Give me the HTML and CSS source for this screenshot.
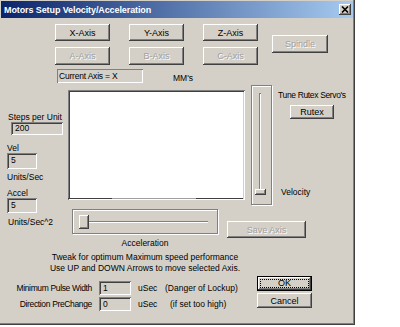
FILE: index.html
```html
<!DOCTYPE html>
<html lang="en">
  <head>
    <meta charset="UTF-8" />
    <title>Motors Setup Velocity/Acceleration</title>
    <link rel="stylesheet" href="styles.css">
  </head>
  <body>
    <div class="dialog">
      <div class="titlebar">
        <span class="title">Motors Setup Velocity/Acceleration</span>
        <button class="close" aria-label="Close">
          <svg width="8" height="7" viewBox="0 0 8 7">
            <path d="M1 0.5 L7 6.5 M7 0.5 L1 6.5" stroke="#000" stroke-width="1.6" fill="none" />
          </svg>
        </button>
      </div>

      <div class="axis-area">
        <div class="axis-col">
          <div class="axis-grid">
            <button class="btn">X-Axis</button>
            <button class="btn">Y-Axis</button>
            <button class="btn">Z-Axis</button>
            <button class="btn" disabled>A-Axis</button>
            <button class="btn" disabled>B-Axis</button>
            <button class="btn" disabled>C-Axis</button>
          </div>
          <div class="current-row">
            <div class="current">Current Axis = X</div>
            <span class="units">MM's</span>
          </div>
        </div>
        <button class="btn spindle" disabled>Spindle</button>
      </div>

      <div class="tune">
        <div class="params">
          <div class="label steps-label">Steps per Unit</div>
          <div class="field steps-field">200</div>
          <div class="label vel-label">Vel</div>
          <div class="field small-field">5</div>
          <div class="label unit-label">Units/Sec</div>
          <div class="label accel-label">Accel</div>
          <div class="field small-field accel-field">5</div>
          <div class="label unit2-label">Units/Sec^2</div>
        </div>

        <div class="plot">
          <div class="plot-line"></div>
        </div>

        <div class="vslider">
          <div class="vtrack"></div>
          <div class="vthumb"></div>
        </div>

        <div class="servo">
          <div class="label tight">Tune Rutex Servo's</div>
          <button class="btn rutex">Rutex</button>
          <div class="label velocity">Velocity</div>
        </div>

        <div class="accel-row">
          <div class="accel-col">
            <div class="hslider">
              <div class="htrack"></div>
              <div class="hthumb"></div>
            </div>
            <div class="label accel-caption">Acceleration</div>
          </div>
          <button class="btn save" disabled>Save Axis</button>
        </div>
      </div>

      <div class="notes">
        <div>Tweak for optimum Maximum speed performance</div>
        <div>Use UP and DOWN Arrows to move selected Axis.</div>
      </div>

      <div class="bottom">
        <div class="pulse-grid">
          <span class="pulse-label tight">Minimum Pulse Width</span>
          <div class="field pulse-field">1</div>
          <span>uSec</span>
          <span class="note-1">(Danger of Lockup)</span>
          <span class="pulse-label tight">Direction PreChange</span>
          <div class="field pulse-field">0</div>
          <span>uSec</span>
          <span class="note-2">(if set too high)</span>
        </div>
        <div class="actions">
          <button class="btn ok"><span class="focus">OK</span></button>
          <button class="btn cancel">Cancel</button>
        </div>
      </div>
    </div>
  </body>
</html>
```

FILE: styles.css
```css
body {
  margin: 0;
  background: #fff;
  font-family: "Liberation Sans", Arial, sans-serif;
  font-size: 8.5px;
  color: #000;
}
.dialog {
  width: 355px;
  height: 325px;
  box-sizing: border-box;
  background: #d4d0c8;
  box-shadow: inset -1px -1px #404040, inset -2px -2px #808080,
    inset 1px 1px #d4d0c8;
  overflow: hidden;
}
.titlebar {
  display: flex;
  align-items: center;
  height: 17px;
  margin: 1px 2px 0 1px;
  padding: 0 2px 0 3px;
  background: linear-gradient(90deg, #0a246a, #a6caf0);
}
.title {
  flex: 1;
  color: #fff;
  font-weight: bold;
  font-size: 9px;
  letter-spacing: -0.1px;
}
.close {
  width: 12px;
  height: 11px;
  padding: 0;
  border: none;
  display: flex;
  align-items: center;
  justify-content: center;
  background: #d4d0c8;
  box-shadow: inset -1px -1px #404040, inset 1px 1px #fff,
    inset -2px -2px #808080;
}

/* generic win2k controls */
.btn {
  font: inherit;
  font-size: 9px;
  color: #000;
  padding: 0;
  border: none;
  background: #d4d0c8;
  box-shadow: inset -1px -1px #404040, inset 1px 1px #fff,
    inset -2px -2px #808080, inset 2px 2px #d4d0c8;
}
.btn:disabled {
  color: #a0a0a0;
  text-shadow: 1px 1px #fff;
}
.field {
  box-sizing: border-box;
  padding: 2px 0 0 4px;
  line-height: 10px;
  background: #d4d0c8;
  box-shadow: inset 1px 1px #808080, inset -1px -1px #fff,
    inset 2px 2px #404040, inset -2px -2px #d4d0c8;
}
.label {
  line-height: 10px;
  white-space: nowrap;
}
.tight {
  letter-spacing: -0.35px;
}

/* axis buttons */
.axis-area {
  display: flex;
  margin-top: 6px;
}
.axis-col {
  margin-left: 55px;
}
.axis-grid {
  display: grid;
  grid-template-columns: 55px 55px 55px;
  grid-template-rows: 17px 18px;
  column-gap: 19px;
  row-gap: 6px;
}
.current-row {
  display: flex;
  align-items: center;
  margin: 4px 0 0 2px;
}
.current {
  width: 86px;
  height: 14px;
  box-sizing: border-box;
  padding: 2px 0 0 2px;
  line-height: 10px;
  letter-spacing: -0.2px;
  box-shadow: inset 1px 1px #808080, inset -1px -1px #fff;
}
.units {
  margin-left: 30px;
  margin-top: 3px;
}
.spindle {
  width: 56px;
  height: 18px;
  margin: 11px 0 0 14px;
}

/* middle part */
.tune {
  display: grid;
  grid-template-columns: 62px 177px 21px 1fr;
  grid-template-rows: 120px auto;
  column-gap: 6px;
  margin-top: 2px;
}
.params {
  grid-row: 1 / 3;
  padding: 27px 0 0 7px;
}
.steps-label {
  margin-left: 1px;
}
.steps-field {
  width: 52px;
  height: 13px;
  margin-left: 4px;
  padding-top: 1px;
}
.vel-label {
  margin-top: 8px;
}
.small-field {
  width: 30px;
  height: 16px;
}
.unit-label {
  margin-top: 3px;
}
.accel-label {
  margin-top: 6px;
}
.accel-field {
  height: 15px;
}
.unit2-label {
  margin: 4px 0 0 1px;
}
.plot {
  margin-top: 5px;
  height: 110px;
  position: relative;
  background: #fff;
  box-shadow: inset 1px 1px #808080, inset -1px -1px #fff,
    inset 2px 2px #404040, inset -2px -2px #d4d0c8;
}
.plot-line {
  position: absolute;
  left: 0;
  right: 2px;
  bottom: 1px;
  height: 1px;
  background: linear-gradient(90deg, #404040 25%, #a0a0a0 25%, #a0a0a0 73%, #404040 73%);
}
.vslider,
.hslider {
  position: relative;
  box-sizing: border-box;
  border: 1px solid #808080;
  box-shadow: inset 1px 1px #fff, 1px 1px #fff;
}
.vslider {
  height: 120px;
}
.vtrack {
  position: absolute;
  left: 7px;
  top: 7px;
  width: 2px;
  height: 97px;
  box-shadow: inset 1px 1px #808080, inset -1px -1px #fff;
}
.vthumb {
  position: absolute;
  left: 3px;
  top: 103px;
  width: 11px;
  height: 6px;
  background: #d4d0c8;
  box-shadow: inset -1px -1px #404040, inset 1px 1px #fff,
    inset -2px -2px #808080;
}
.servo {
  display: flex;
  flex-direction: column;
  padding: 5px 0 8px;
}
.rutex {
  width: 44px;
  height: 14px;
  margin: 5px 0 0 12px;
}
.velocity {
  margin: auto 0 0 3px;
}
.accel-row {
  grid-column: 2 / 5;
  display: flex;
  margin-left: 4px;
}
.accel-col {
  width: 146px;
}
.hslider {
  height: 25px;
  margin-top: 4px;
}
.htrack {
  position: absolute;
  left: 9px;
  top: 11px;
  width: 126px;
  height: 2px;
  box-shadow: inset 1px 1px #808080, inset -1px -1px #fff;
}
.hthumb {
  position: absolute;
  left: 6px;
  top: 5px;
  width: 10px;
  height: 14px;
  background: #d4d0c8;
  box-shadow: inset -1px -1px #404040, inset 1px 1px #fff,
    inset -2px -2px #808080;
}
.accel-caption {
  margin-top: 4px;
  text-align: center;
}
.save {
  width: 79px;
  height: 17px;
  margin: 16px 0 0 9px;
}

/* lower part */
.notes {
  width: 290px;
  margin-top: 4px;
  line-height: 11px;
  text-align: center;
}
.bottom {
  display: flex;
  margin-top: 2px;
}
.pulse-grid {
  width: 257px;
  display: grid;
  grid-template-columns: 92px 32px 20px 1fr;
  grid-auto-rows: 14px;
  column-gap: 7px;
  row-gap: 2px;
  align-items: center;
  margin-top: 5px;
  white-space: nowrap;
}
.pulse-label {
  text-align: right;
}
.pulse-field {
  height: 14px;
}
.note-2 {
  margin-left: 5px;
}
.actions {
  display: flex;
  flex-direction: column;
  gap: 2px;
}
.btn.ok,
.btn.cancel {
  width: 55px;
  height: 15px;
}
.btn.ok {
  box-shadow: inset 0 0 0 1px #000, inset -2px -2px #404040,
    inset 2px 2px #fff, inset -3px -3px #808080;
  display: flex;
  padding: 3px;
}
.focus {
  flex: 1;
  border: 1px dotted #000;
  line-height: 7px;
}
```
